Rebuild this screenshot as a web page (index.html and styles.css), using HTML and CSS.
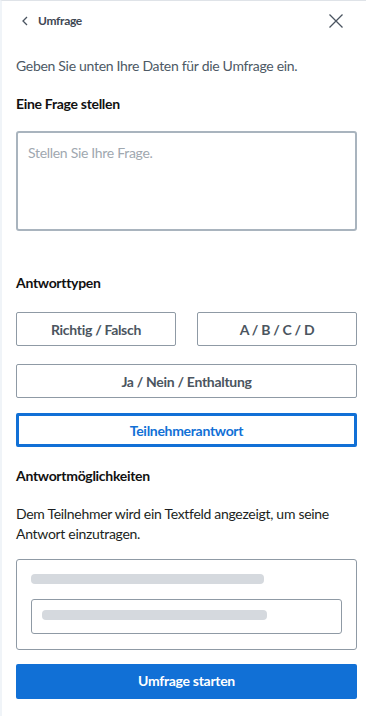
FILE: index.html
```html
<!DOCTYPE html>
<html lang="de">
<head>
  <meta charset="UTF-8">
  <meta name="viewport" content="width=device-width, initial-scale=1.0">
  <title>Umfrage</title>
  <link rel="stylesheet" href="styles.css">
</head>
<body>
  <div class="panel">
    <header class="panel-header">
      <a href="#" class="back">
        <svg width="8" height="10" viewBox="0 0 8 10" aria-hidden="true"><path d="M6 1 L2 5 L6 9" fill="none" stroke="#4a5460" stroke-width="1.3"/></svg>
        <span>Umfrage</span>
      </a>
      <button class="close" aria-label="Schließen">
        <svg width="16" height="16" viewBox="0 0 16 16" aria-hidden="true"><path d="M1.5 1.5 L14.5 14.5 M14.5 1.5 L1.5 14.5" fill="none" stroke="#4a5460" stroke-width="1.3"/></svg>
      </button>
    </header>

    <p class="intro">Geben Sie unten Ihre Daten für die Umfrage ein.</p>

    <h2 class="section-title">Eine Frage stellen</h2>
    <textarea class="question" placeholder="Stellen Sie Ihre Frage."></textarea>

    <h2 class="section-title types-title">Antworttypen</h2>
    <div class="types">
      <button class="type">Richtig / Falsch</button>
      <button class="type">A / B / C / D</button>
      <button class="type wide">Ja / Nein / Enthaltung</button>
      <button class="type wide selected">Teilnehmerantwort</button>
    </div>

    <h2 class="section-title options-title">Antwortmöglichkeiten</h2>
    <p class="desc">Dem Teilnehmer wird ein Textfeld angezeigt, um seine Antwort einzutragen.</p>

    <div class="preview">
      <div class="bar bar-label"></div>
      <div class="preview-input">
        <div class="bar"></div>
      </div>
    </div>

    <button class="start">Umfrage starten</button>
  </div>
</body>
</html>
```

FILE: styles.css
```css
:root {
  --color-text: #111;
  --color-muted: #4d5965;
  --color-border: #8f9aa5;
  --color-primary: #1170d6;
  --color-bar: #d5d9de;
}

* {
  box-sizing: border-box;
}

body {
  margin: 0;
  font-family: "Lato", "Open Sans", sans-serif;
  letter-spacing: -0.3px;
  color: var(--color-text);
  background: #fff;
}

.panel {
  min-height: 716px;
  border-top: 1px solid #dfe3e8;
  border-left: 2px solid #f0f4f8;
  padding: 0 9px 0 14px;
}

.panel-header {
  display: flex;
  align-items: center;
  justify-content: space-between;
  height: 39px;
}

.back {
  display: flex;
  align-items: center;
  gap: 9px;
  padding-left: 5px;
  color: #3e4853;
  font-size: 12px;
  font-weight: 700;
  text-decoration: none;
}

.close {
  display: flex;
  background: none;
  border: none;
  padding: 0;
  margin-right: 13px;
  cursor: pointer;
}

.intro {
  margin: 16px 0 0;
  font-size: 14px;
  line-height: 20px;
  color: var(--color-muted);
}

.section-title {
  margin: 18px 0 0;
  font-size: 14px;
  line-height: 20px;
  font-weight: 700;
}

.question {
  display: block;
  width: 100%;
  height: 100px;
  margin-top: 17px;
  padding: 10px 10px;
  border: 2px solid #a9b4be;
  border-radius: 3px;
  font-family: inherit;
  font-size: 14px;
  line-height: 20px;
  letter-spacing: -0.3px;
  resize: none;
}

.question::placeholder {
  color: #a0a8b0;
}

.types-title {
  margin-top: 42px;
}

.types {
  display: grid;
  grid-template-columns: 1fr 1fr;
  column-gap: 21px;
  row-gap: 18px;
  margin-top: 19px;
}

.type {
  height: 34px;
  background: #fff;
  border: 1px solid var(--color-border);
  border-radius: 2px;
  font-family: inherit;
  font-size: 14px;
  font-weight: 700;
  letter-spacing: -0.3px;
  color: #4b5560;
  cursor: pointer;
}

.type.wide {
  grid-column: 1 / 3;
}

.type.selected {
  margin-top: -3px;
  border: 3px solid var(--color-primary);
  color: var(--color-primary);
}

.options-title {
  margin-top: 19px;
}

.desc {
  margin: 18px 0 0;
  font-size: 14px;
  line-height: 20px;
  color: #1c1f22;
}

.preview {
  margin-top: 15px;
  padding: 14px 14px 15px;
  border: 1px solid var(--color-border);
  border-radius: 3px;
}

.bar {
  height: 10px;
  width: 225px;
  background: var(--color-bar);
  border-radius: 4px;
}

.bar-label {
  width: 233px;
  margin-bottom: 15px;
}

.preview-input {
  height: 35px;
  padding: 10px;
  border: 1px solid var(--color-border);
  border-radius: 3px;
}

.start {
  display: block;
  width: 100%;
  height: 35px;
  margin-top: 14px;
  padding-bottom: 3px;
  background: var(--color-primary);
  border: none;
  border-radius: 2px;
  color: #fff;
  font-family: inherit;
  font-size: 14px;
  font-weight: 700;
  letter-spacing: -0.3px;
  cursor: pointer;
}
```
